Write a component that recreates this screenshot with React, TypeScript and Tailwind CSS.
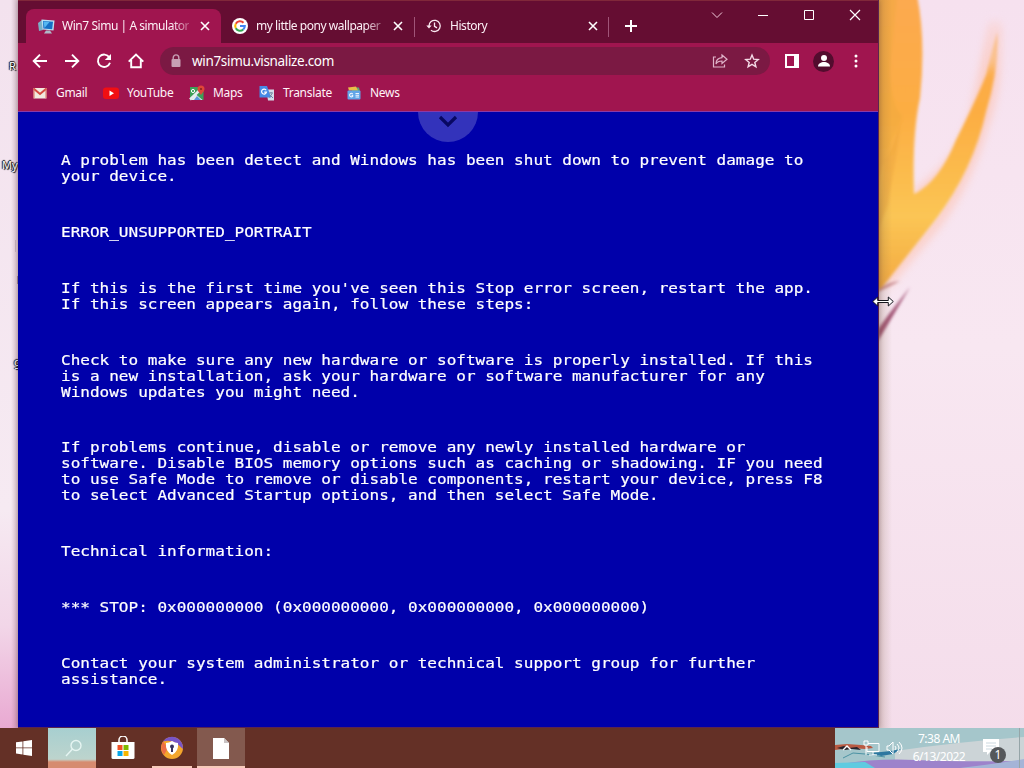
import type { ReactNode } from 'react';

const errorText = [
  ['A problem has been detect and Windows has been shut down to prevent damage to', 'your device.'],
  ['ERROR_UNSUPPORTED_PORTRAIT'],
  ["If this is the first time you've seen this Stop error screen, restart the app.", 'If this screen appears again, follow these steps:'],
  ['Check to make sure any new hardware or software is properly installed. If this', 'is a new installation, ask your hardware or software manufacturer for any', 'Windows updates you might need.'],
  ['If problems continue, disable or remove any newly installed hardware or', 'software. Disable BIOS memory options such as caching or shadowing. IF you need', 'to use Safe Mode to remove or disable components, restart your device, press F8', 'to select Advanced Startup options, and then select Safe Mode.'],
  ['Technical information:'],
  ['*** STOP: 0x000000000 (0x000000000, 0x000000000, 0x000000000)'],
  ['Contact your system administrator or technical support group for further', 'assistance.'],
];

function Wallpaper() {
  return (
    <svg className="absolute inset-0" width="1024" height="768" viewBox="0 0 1024 768">
      <defs>
        <linearGradient id="sky" x1="0" y1="0" x2="0" y2="1">
          <stop offset="0" stopColor="#f6e1ef" />
          <stop offset="0.45" stopColor="#f8e7f1" />
          <stop offset="1" stopColor="#f4dcea" />
        </linearGradient>
        <linearGradient id="edge" x1="0" y1="0" x2="0" y2="1">
          <stop offset="0" stopColor="#f3e2ee" />
          <stop offset="0.7" stopColor="#f6eaf2" />
          <stop offset="0.86" stopColor="#f2d6e8" />
          <stop offset="1" stopColor="#e9a9d2" />
        </linearGradient>
        <linearGradient id="mane" x1="0" y1="0" x2="0" y2="1">
          <stop offset="0" stopColor="#fca950" />
          <stop offset="0.4" stopColor="#fcad42" />
          <stop offset="0.75" stopColor="#fbc554" />
          <stop offset="1" stopColor="#f3a941" />
        </linearGradient>
        <linearGradient id="shade" x1="0" y1="0" x2="1" y2="0">
          <stop offset="0" stopColor="#7d6440" stopOpacity="0.5" />
          <stop offset="1" stopColor="#7d6440" stopOpacity="0" />
        </linearGradient>
        <filter id="soft" x="-20%" y="-20%" width="140%" height="140%"><feGaussianBlur stdDeviation="1.5" /></filter>
        <filter id="glow" x="-30%" y="-30%" width="160%" height="160%"><feGaussianBlur stdDeviation="5" /></filter>
      </defs>
      <rect width="1024" height="768" fill="url(#sky)" />
      <rect width="18" height="728" fill="url(#edge)" />
      <path d="M915 195Q967 160 977 105L995 24Q998 90 983 125Q966 185 935 225L885 285" fill="none" stroke="#ffb99c" strokeWidth="8" opacity="0.6" filter="url(#glow)" />
      <g filter="url(#soft)">
        <path d="M870 -5H917Q926 40 920 98Q912 135 914 194Q939 182 956 140Q976 100 986 75L997 32Q999 70 986 112Q973 170 936 219L881 289L870 290Z" fill="url(#mane)" />
        <path d="M870 -5H897L890 70Q892 110 902 115L881 170L870 210Z" fill="#eea93f" opacity="0.45" />
        <path d="M902 115Q895 145 884 160L878 230L888 205Q896 160 902 115Z" fill="#e9a03c" opacity="0.4" />
        <path d="M878 290Q888 282 900 281Q890 286 878 292Z" fill="#c4868b" />
        <path d="M878 341L910 287Q900 300 889 314L878 329Z" fill="#a25476" />
      </g>
      <path d="M990 20L999 20L998 62L988 74Z" fill="#f7e1ee" opacity="0.6" filter="url(#glow)" />
      <rect x="878" width="14" height="728" fill="url(#shade)" opacity="0.5" />
    </svg>
  );
}

function Tab({ icon, title, active, width }: { icon: ReactNode; title: string; active?: boolean; width: string }) {
  return (
    <div className={`relative flex h-[34px] items-center pl-3 ${width} ${active ? 'rounded-t-lg bg-[#a0154f]' : ''}`}>
      <span className="w-4 shrink-0">{icon}</span>
      <span className="ml-2 w-[127px] whitespace-nowrap text-[12px] tracking-[-0.45px] text-[#fdf0f6] [mask-image:linear-gradient(to_right,#000_86%,rgba(0,0,0,0.3))]">{title}</span>
      <svg className="ml-auto mr-[11px] shrink-0" width="10" height="10" viewBox="0 0 10 10" stroke="#fff" strokeWidth="1.6"><path d="M1 1l8 8M9 1L1 9" /></svg>
    </div>
  );
}

const simuIcon = (
  <svg width="17" height="16" viewBox="0 0 17 16">
    <path d="M0 5l4-3 1 10-4 1z" fill="#7bb0c5" /><path d="M3.5 1.5l13 1-1 10-11-1z" fill="#b9e0f5" />
    <path d="M5 3l10 .8-.8 7.5-8.800-.8z" fill="#166fc5" /><path d="M5.500 3.500l6 .5-5 6z" fill="#55b7f1" />
    <path d="M8 12.500h4l2 3H6z" fill="#aebac9" />
  </svg>
);

const googleIcon = (
  <svg width="16" height="16" viewBox="0 0 16 16" fill="none" strokeWidth="2.1">
    <circle cx="8" cy="8" r="8" fill="#fff" />
    <path d="M11.5 4.7A4.8 4.8 0 0 0 3.8 5.7" stroke="#ea4335" /><path d="M3.8 5.7a4.8 4.8 0 0 0 0 4.6" stroke="#fbbc05" />
    <path d="M3.8 10.3a4.8 4.8 0 0 0 7.4 1.2" stroke="#34a853" /><path d="M11.2 11.5A4.8 4.8 0 0 0 12.8 8H8" stroke="#4285f4" />
  </svg>
);

const historyIcon = (
  <svg width="16" height="16" viewBox="0 0 16 16" fill="none" stroke="#fbe9f1" strokeWidth="1.3">
    <path d="M3 8a5.600 5.600 0 1 1 2 4.200M8.500 4.500V8.300l2.500 1.600" /><path d="M.3 7.500h5.400L3 10.500z" fill="#fbe9f1" stroke="none" />
  </svg>
);

function TabStrip() {
  return (
    <div className="flex h-[43px] border-t border-[#80283a] bg-[#650d32]">
      <div className="flex flex-1 items-start pl-2 pt-2">
        <Tab active width="w-[195px]" title="Win7 Simu | A simulator" icon={simuIcon} />
        <div className="-ml-px"><Tab width="w-[194px]" title="my little pony wallpaper" icon={googleIcon} /></div>
        <div className="mt-2 h-5 w-px bg-[#a05578]" />
        <div className="-ml-px"><Tab width="w-[195px]" title="History" icon={historyIcon} /></div>
        <div className="-ml-px mt-2 h-5 w-px bg-[#a05578]" />
        <svg className="ml-4 mt-[11px]" width="12" height="12" viewBox="0 0 12 12" stroke="#fff" strokeWidth="2"><path d="M6 0v12M0 6h12" /></svg>
      </div>
      <div className="flex h-7 w-[184px] items-center justify-between pl-[17px] pr-[17px]">
        <svg width="12" height="12" viewBox="0 0 12 12" fill="none" stroke="#f3cddd"><path d="M1 3.500l5 5 5-5" /></svg>
        <svg width="12" height="12" viewBox="0 0 12 12" stroke="#fff"><path d="M1 6.500h10" /></svg>
        <svg width="12" height="12" viewBox="0 0 12 12" fill="none" stroke="#fff"><path d="M1.500 1.500h9v9h-9z" /></svg>
        <svg width="12" height="12" viewBox="0 0 12 12" stroke="#fff" strokeWidth="1.2"><path d="M1 1l10 10M11 1L1 11" /></svg>
      </div>
    </div>
  );
}

function Toolbar() {
  return (
    <div className="flex h-9 items-center bg-[#a0154f] pl-[14px]">
      <div className="flex w-32 gap-4">
        <svg width="16" height="16" viewBox="0 0 16 16" fill="none" stroke="#fff" strokeWidth="1.9"><path d="M15 8H2M8 1.700L1.700 8 8 14.300" /></svg>
        <svg width="16" height="16" viewBox="0 0 16 16" fill="none" stroke="#fff" strokeWidth="1.9"><path d="M1 8h13M8 1.700L14.300 8 8 14.300" /></svg>
        <svg width="16" height="16" viewBox="0 0 16 16" fill="none" stroke="#fff" strokeWidth="1.9"><path d="M13.300 4.300A6.200 6.200 0 1 0 14 9.800" /><path d="M15 .9v6.200H8.800z" fill="#fff" stroke="none" /></svg>
        <svg width="16" height="16" viewBox="0 0 16 16" fill="none" stroke="#fff" strokeWidth="1.9"><path d="M.7 8.600L8 1.500l7.300 7.100M3.200 7v7.200h9.600V7" /></svg>
      </div>
      <div className="flex h-7 w-[610px] items-center rounded-full bg-[#7b1943] pl-[10px] pr-[10px]">
        <svg width="12" height="14" viewBox="0 0 12 14"><path d="M3.200 6V3.700a2.800 2.800 0 0 1 5.600 0V6" fill="none" stroke="#c7a0b4" strokeWidth="1.4" /><rect x="1.500" y="5" width="9" height="8" rx="1" fill="#c7a0b4" /></svg>
        <span className="ml-[10px] flex-1 text-[13.5px] tracking-[-0.33px] text-white">win7simu.visnalize.com</span>
        <svg width="16" height="16" viewBox="0 0 16 16" fill="none" stroke="#dfb3c9" strokeWidth="1.2"><path d="M4 4H1.500v10h11v-2.500" /><path d="M10 2l5 4.200-5 4.300V8C7 8 5 9 4 11c0-4 2.300-6 6-6.300z" /></svg>
        <svg className="ml-4" width="16" height="16" viewBox="0 0 16 16" fill="none" stroke="#f4dbe7" strokeWidth="1.4"><path d="M8 2l1.700 4.200 4.500.3-3.400 2.900 1.100 4.400L8 11.400l-3.900 2.400 1.100-4.400-3.400-2.900 4.500-.3z" /></svg>
      </div>
      <svg className="ml-[15px]" width="14" height="14" viewBox="0 0 14 14"><path d="M0 0h14v14H0zM2 2v10h7V2z" fill="#fff" fillRule="evenodd" /></svg>
      <span className="ml-[14px] flex h-[21px] w-[21px] items-center justify-center rounded-full bg-[#530c2e]">
        <svg width="14" height="14" viewBox="0 0 14 14" fill="#fff"><circle cx="7" cy="4" r="3" /><path d="M1 12.500c0-3 3-4.500 6-4.500s6 1.500 6 4.500z" /></svg>
      </span>
      <svg className="ml-5" width="4" height="14" viewBox="0 0 4 14" fill="#fff"><circle cx="2" cy="2" r="1.500" /><circle cx="2" cy="7" r="1.500" /><circle cx="2" cy="12" r="1.500" /></svg>
    </div>
  );
}

const bookmarks = [
  {
    name: 'Gmail', width: 'w-[71px]',
    icon: <><rect x="1.500" y="3" width="13" height="10.500" fill="#f2eadf" /><path d="M1.500 3.500L8 9l6.500-5.500" fill="none" stroke="#d64a41" strokeWidth="2" /><path d="M2 4v9M14 4v9" stroke="#dc6b5c" /></>,
  },
  {
    name: 'YouTube', width: 'w-[86px]',
    icon: <><rect x="0" y="2.500" width="16" height="11.500" rx="3" fill="#f10f13" /><path d="M6.500 5.500v5.500l4.500-2.750z" fill="#fff" /></>,
  },
  {
    name: 'Maps', width: 'w-[70px]',
    icon: <><rect x="1" y="2" width="13.500" height="13" fill="#3d9f58" /><path d="M1 14.500L13 3" stroke="#e7edf0" strokeWidth="2.500" /><path d="M7 9.500l6.500 5.500H2z" fill="#e7edf0" /><path d="M8 11l4 4H5z" fill="#5b95d9" /><path d="M12 10C10 7 8.500 6 8.500 4a3.500 3.500 0 0 1 7 0c0 2-1.500 3-3.500 6z" fill="#df4638" /><circle cx="12" cy="4" r="1.100" fill="#882421" /><circle cx="4" cy="6" r="1.600" fill="none" stroke="#fff" /></>,
  },
  {
    name: 'Translate', width: 'w-[87px]',
    icon: <><path d="M7 4.500h8v11H9z" fill="#d4dce9" /><path d="M.5 1H8l4 11.500H.5z" fill="#478ae6" /><path d="M7.200 5.200a2.500 2.500 0 1 0 .3 2H5.200" fill="none" stroke="#fff" strokeWidth="1.200" /><path d="M10 8h4M12 7v1m1 .5l-2.500 4M11 10l3 3" stroke="#71839d" fill="none" /></>,
  },
  {
    name: 'News', width: 'w-[60px]',
    icon: <><path d="M6 2.500h7l1 4H6z" fill="#59a774" /><path d="M2 2.500l8-1 2 4H3z" fill="#e9bd48" /><rect x="1.500" y="5.500" width="13" height="9" rx="1" fill="#60a5e8" /><path d="M6.700 8.800a1.800 1.800 0 1 0 0 2.500v-1H5.500M9.500 8.500H13M9.500 10.200H13M9.500 12H13" fill="none" stroke="#eef6ff" strokeWidth="1.100" /></>,
  },
];

function BookmarksBar() {
  return (
    <div className="flex h-[33px] items-center border-b border-[#8a39a8] bg-[#a0154f] pb-1 pl-[14px] text-[12px] tracking-[-0.3px] text-[#fff3f8]">
      {bookmarks.map(b => (
        <div key={b.name} className={`flex shrink-0 items-center gap-2 ${b.width}`}>
          <svg className="shrink-0" width="16" height="16" viewBox="0 0 16 16">{b.icon}</svg>
          <span>{b.name}</span>
        </div>
      ))}
    </div>
  );
}

function StopScreen() {
  return (
    <div className="relative flex-1 bg-[#0000aa] pl-[42.600px] pt-10">
      <div className="absolute left-[400px] top-0 flex h-[30px] w-[60px] items-center justify-center overflow-hidden rounded-b-full bg-[#3333bb]">
        <svg className="-mt-3" width="20" height="14" viewBox="0 0 20 14" fill="none" stroke="#080862" strokeWidth="3.2"><path d="M2 3l8 8 8-8" /></svg>
      </div>
      {/* wide console face: 14px glyphs stretched to a 9.64px cell */}
      <div className="flex w-[700px] origin-left scale-x-[1.1438] flex-col gap-10 whitespace-pre font-['DejaVu_Sans_Mono',monospace] text-[14px] leading-4 text-white [-webkit-text-stroke:0.2px_#fff]">
        {errorText.map((lines, i) => (
          <div key={i} className={i === 4 ? '-mt-px' : ''}>
            {lines.map(line => <p key={line}>{line}</p>)}
          </div>
        ))}
      </div>
    </div>
  );
}

function Tray() {
  return (
    <div className="relative h-10 w-[189px] overflow-hidden bg-[#a5c6cb] text-white">
      <svg className="absolute inset-0" width="189" height="40" viewBox="0 0 189 40">
        <path d="M60 23Q120 14 189 9V40H60z" fill="#ccd4d7" />
        <path d="M0 17l12-1 14 1 10 1 2 2-8 1-14-1-16 2z" fill="#b95a42" />
        <path d="M2 20l7-2 5 2 8-1 4 3-9-1-7 1z" fill="#28232b" />
        <path d="M36 25l20-2 10-2-8 5-12 2z" fill="#2c77a0" />
        <path d="M8 30l10-5 12 1M30 26l20 3" fill="none" stroke="#4b92a4" />
        <path d="M0 37Q40 30 80 32T189 33V40H0z" fill="#9d83cb" />
        <path d="M0 35l30-1 10 6H0z" fill="#5fcbe0" />
        <path d="M125 40Q160 36 189 31V40z" fill="#a5b4d7" />
      </svg>
      <div className="relative flex h-full items-center">
        <svg className="ml-[7px]" width="10" height="6" viewBox="0 0 10 6" fill="none" stroke="#fff" strokeWidth="1.4"><path d="M1 5l4-4 4 4" /></svg>
        <svg className="ml-[11px]" width="17" height="16" viewBox="0 0 17 16" fill="none" stroke="#fff"><path d="M5 3.500h11v8H4V7M10 12v3M6 15h8M1 1h4v4H1zM3 5v10" /></svg>
        <svg className="ml-[6px]" width="17" height="16" viewBox="0 0 17 16" fill="none" stroke="#fff"><path d="M1 6h2l4-4v12l-4-4H1zM9 6q2 2 0 4M11 4q4 4 0 8M13 2q6 6 0 12" /></svg>
        <div className="ml-[8px] w-[56px] text-center text-[12px] leading-[18px] tracking-[-0.5px]"><p>7:38 AM</p><p>6/13/2022</p></div>
        <svg className="ml-[16px]" width="24" height="26" viewBox="0 0 24 26"><path d="M0 4h16v13H7l-3 3v-3H0z" fill="#fff" /><path d="M3 8h10M3 11h10M3 14h6" stroke="#cbd8df" /></svg>
        <span className="absolute left-[155px] top-[19px] flex h-4 w-4 items-center justify-center rounded-full bg-[#55585b] text-[12px]">1</span>
      </div>
      <div className="absolute bottom-0 left-[184px] top-0 w-px bg-[#95a5a8]" />
    </div>
  );
}

function Taskbar() {
  return (
    <div className="relative flex h-10 bg-[#643026]">
      <div className="flex w-12 items-center justify-center">
        <svg width="16" height="16" viewBox="0 0 16 16" fill="#fff"><path d="M0 2.300l6.500-.9v6.100H0zM7.300 1.300L16 0v7.500H7.300zM0 8.300h6.500v6.200L0 13.600zM7.300 8.300H16V16l-8.700-1.300z" /></svg>
      </div>
      <div className="flex w-12 items-center justify-center bg-linear-to-b from-[#a7cfd0] via-[#bdd4cd] via-78% to-[#d68b70] to-85% pl-[3px]">
        <svg width="18" height="18" viewBox="0 0 18 18" fill="none" stroke="#e6f5f2" strokeWidth="1.400"><circle cx="11" cy="6.500" r="5" /><path d="M7.500 10L1 17" /></svg>
      </div>
      <div className="flex w-[52px] items-center justify-center pl-px">
        <svg width="24" height="24" viewBox="0 0 24 24"><path d="M8 8V4a4 4 0 0 1 8 0v4" fill="none" stroke="#fff" strokeWidth="1.500" /><path d="M.5 6h23v15.500q0 1.500-1.500 1.500H2q-1.500 0-1.500-1.500z" fill="#fff" /><path d="M6.500 9h5v5h-5z" fill="#f05125" /><path d="M12.500 9h5v5h-5z" fill="#7eb900" /><path d="M6.500 15h5v5h-5z" fill="#06a5e9" /><path d="M12.500 15h5v5h-5z" fill="#f7b500" /></svg>
      </div>
      <div className="flex w-12 items-center justify-center">
        <svg width="24" height="24" viewBox="0 0 24 24"><circle cx="12" cy="12" r="11" fill="#f4a62c" /><path d="M3 5.500A11 11 0 0 1 22.900 13C18 8 12 3 3 5.500z" fill="#7855c7" /><path d="M3 5.500Q-1 12 4 19l4-7z" fill="#ee6d45" /><path d="M6 7q3 0 6-2 3 2 6 2 1 8-6 12-7-4-6-12z" fill="#fff" /><circle cx="12" cy="10.500" r="2" fill="#38335e" /><path d="M11 11h2v5h-2z" fill="#38335e" /></svg>
      </div>
      <div className="ml-px flex w-12 items-center justify-center bg-[#83594e]">
        <svg width="16" height="21" viewBox="0 0 16 21"><path d="M0 0h11l5 5v16H0z" fill="#fff" /><path d="M11 0v5h5z" fill="#c9c3c4" /></svg>
      </div>
      <div className="absolute bottom-0 left-[152px] h-[2px] w-10 bg-[#f7cbbb]" />
      <div className="absolute bottom-0 left-[197px] h-[2px] w-12 bg-[#f7cbbb]" />
      <div className="flex-1" />
      <Tray />
    </div>
  );
}

export default function App() {
  return (
    <div className="relative flex h-[768px] w-[1024px] flex-col overflow-hidden font-['Noto_Sans','Open_Sans',sans-serif]">
      <Wallpaper />
      <div className="relative flex h-[728px]">
        {/* desktop icon labels peeking out from under the window */}
        <div className="relative w-[18px] bg-linear-to-r from-transparent from-60% to-[#8b6872]/30 text-[11px] text-white [text-shadow:1px_1px_1px_#000,-1px_0_1px_#000,0_-1px_1px_#000]">
          <span className="absolute left-[9px] top-[58px]">R</span>
          <span className="absolute left-[2px] top-[157px]">My</span>
          <span className="absolute left-[14px] top-[354px]">g</span>
          <div className="absolute left-[15px] top-[240px] h-3 w-px bg-[#c5b4bf]" />
          <div className="absolute left-[17px] top-[276px] h-2 w-px bg-[#9d8993]" />
        </div>
        <div className="relative flex w-[861px] flex-col border-b border-r border-[#5a2450] shadow-[0_0_5px_rgba(70,30,40,0.35)]">
          <TabStrip />
          <Toolbar />
          <BookmarksBar />
          <StopScreen />
        </div>
      </div>
      <Taskbar />
      <svg className="absolute left-[872px] top-[295px]" width="22" height="13" viewBox="0 0 22 13"><path d="M.7 6.500l5-4.500v3.500h10.600V2l5 4.500-5 4.500V7.500H5.700V11z" fill="#fff" stroke="#16161d" /></svg>
    </div>
  );
}
